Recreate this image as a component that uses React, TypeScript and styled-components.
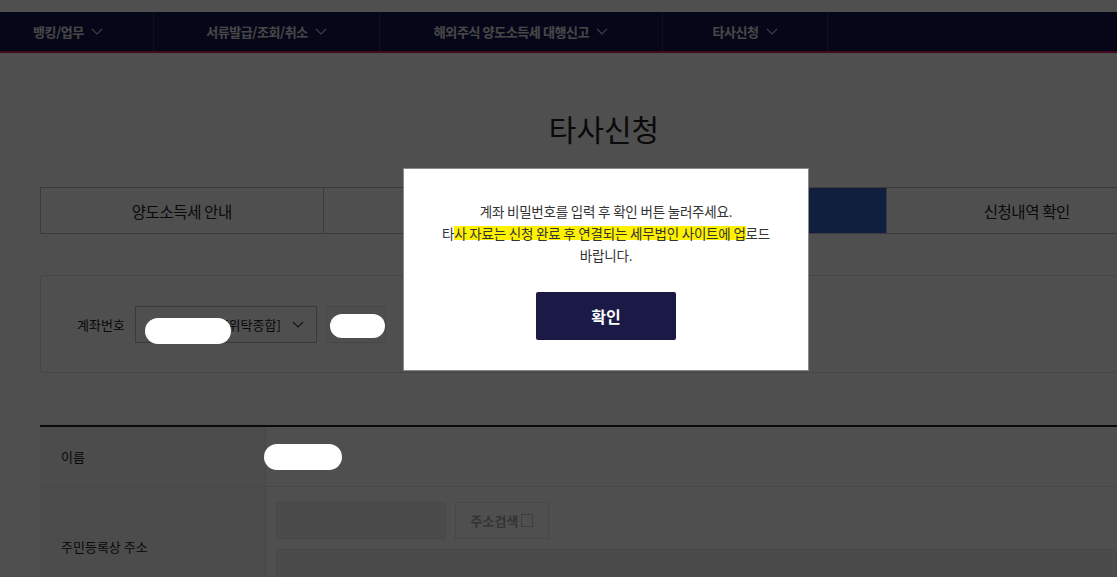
import React from "react";
import styled, { createGlobalStyle } from "styled-components";

const GlobalStyle = createGlobalStyle`
  html, body {
    margin: 0;
    padding: 0;
    background: #ffffff;
    overflow: hidden;
  }
  body {
    font-family: "Noto Sans CJK KR", "Noto Sans", sans-serif;
    color: #333;
  }
  * { box-sizing: border-box; }
`;

const Page = styled.div`
  width: 1208px;
  min-height: 577px;
  background: #fff;
`;

const TopStrip = styled.div`
  height: 12px;
`;

const Nav = styled.nav`
  display: flex;
  height: 41px;
  background: #161650;
  border-bottom: 2px solid #d81b60;
`;

const NavItem = styled.div<{ $w: number; $pr?: number }>`
  width: ${(p) => p.$w}px;
  display: flex;
  align-items: center;
  justify-content: center;
  gap: 7px;
  padding-right: ${(p) => p.$pr ?? 0}px;
  border-right: 1px solid rgba(255, 255, 255, 0.14);
  color: #e6e6ea;
  font-size: 13px;
  font-weight: 700;
  letter-spacing: -0.4px;
`;

const Main = styled.main`
  width: 1128px;
  margin: 0 40px;
`;

const Title = styled.h1`
  margin: 55px 0 0;
  text-align: center;
  font-size: 30px;
  line-height: 40px;
  font-weight: 400;
  color: #222;
`;

const Tabs = styled.div`
  margin-top: 39px;
  display: grid;
  grid-template-columns: repeat(4, 1fr);
  height: 47px;
  border: 1px solid #bdbdbd;
`;

const Tab = styled.div<{ $active?: boolean }>`
  display: flex;
  align-items: center;
  justify-content: center;
  border-left: 1px solid #bdbdbd;
  font-size: 15.5px;
  letter-spacing: -0.4px;
  background: ${(p) => (p.$active ? "#3366c5" : "transparent")};
  color: ${(p) => (p.$active ? "#fff" : "#222")};
  &:first-child { border-left: none; }
`;

const AccountBox = styled.section`
  margin-top: 41px;
  height: 98px;
  display: flex;
  align-items: center;
  padding-left: 36px;
  border: 1px solid #e3e3e3;
  border-radius: 3px;
`;

const FieldLabel = styled.span`
  font-size: 13px;
  color: #222;
  margin-right: 10px;
`;

const Select = styled.div`
  width: 182px;
  height: 37px;
  display: flex;
  align-items: center;
  justify-content: flex-end;
  gap: 11px;
  padding-right: 12px;
  border: 1px solid #bbb;
  font-size: 13px;
  color: #222;
`;

const SmallButton = styled.div`
  width: 60px;
  height: 37px;
  margin-left: 9px;
  border: 1px solid #e6e6e6;
  background: #fafafa;
`;

const Table = styled.section`
  margin-top: 52px;
  border-top: 2px solid #222;
`;

const Row = styled.div<{ $h?: number }>`
  display: grid;
  grid-template-columns: 226px 1fr;
  min-height: ${(p) => (p.$h ? `${p.$h}px` : "auto")};
  border-bottom: 1px solid #e6e6e6;
`;

const LabelCell = styled.div`
  display: flex;
  align-items: center;
  padding-left: 21px;
  background: #f6f6f6;
  border-right: 1px solid #e6e6e6;
  font-size: 13px;
  color: #222;
`;

const ValueCell = styled.div`
  padding: 15px 0 15px 10px;
  display: flex;
  flex-direction: column;
  gap: 10px;
`;

const InputLine = styled.div`
  display: flex;
  gap: 9px;
`;

const Input = styled.div<{ $w?: number; $h: number }>`
  width: ${(p) => (p.$w ? `${p.$w}px` : "100%")};
  height: ${(p) => p.$h}px;
  background: #f2f2f2;
  border: 1px solid #e8e8e8;
`;

const SearchButton = styled.div`
  width: 94px;
  height: 37px;
  display: flex;
  align-items: center;
  justify-content: center;
  gap: 3px;
  border: 1px solid #e6e6e6;
  font-size: 13px;
  font-weight: 700;
  color: #a8a8a8;
`;

const Tofu = styled.span`
  width: 12px;
  height: 13px;
  border: 1px solid #c8c8c8;
`;

const Overlay = styled.div`
  position: fixed;
  inset: 0;
  background: rgba(0, 0, 0, 0.69);
  z-index: 10;
`;

const Dialog = styled.div`
  position: fixed;
  left: 403px;
  top: 168px;
  width: 406px;
  z-index: 20;
  background: #fff;
  border: 1px solid #8a8a8a;
  padding: 31px 0 30px;
  text-align: center;
`;

const Message = styled.p`
  margin: 0;
  font-size: 13.5px;
  line-height: 22px;
  letter-spacing: -0.2px;
  white-space: nowrap;
  color: #333;
`;

const Mark = styled.span`
  background: linear-gradient(
    transparent 3px,
    #fff200 3px,
    #fff200 17px,
    transparent 17px
  );
`;

const ConfirmButton = styled.button`
  display: block;
  margin: 26px auto 0;
  width: 140px;
  height: 48px;
  border: none;
  border-radius: 2px;
  background: #1b1a47;
  color: #fff;
  font-family: inherit;
  font-size: 16px;
  font-weight: 700;
`;

const Redaction = styled.div<{ $x: number; $y: number; $w: number; $h: number }>`
  position: fixed;
  left: ${(p) => p.$x}px;
  top: ${(p) => p.$y}px;
  width: ${(p) => p.$w}px;
  height: ${(p) => p.$h}px;
  border-radius: ${(p) => p.$h / 2}px;
  background: #fff;
  z-index: 30;
`;

const Chevron = ({ color }: { color: string }) => (
  <svg width="12" height="7" viewBox="0 0 12 7" fill="none">
    <polyline points="1,1 6,6 11,1" stroke={color} strokeWidth="1.2" />
  </svg>
);

const navItems = [
  { label: "뱅킹/업무", w: 154, pr: 17 },
  { label: "서류발급/조회/취소", w: 226 },
  { label: "해외주식 양도소득세 대행신고", w: 283 },
  { label: "타사신청", w: 165 },
];

export default function App() {
  return (
    <>
      <GlobalStyle />
      <Page>
        <TopStrip />
        <Nav>
          {navItems.map((n) => (
            <NavItem key={n.label} $w={n.w} $pr={n.pr}>
              {n.label}
              <Chevron color="#c8c8d0" />
            </NavItem>
          ))}
        </Nav>
        <Main>
          <Title>타사신청</Title>
          <Tabs>
            <Tab>양도소득세 안내</Tab>
            <Tab>대행신고 안내</Tab>
            <Tab $active>타사신청</Tab>
            <Tab>신청내역 확인</Tab>
          </Tabs>
          <AccountBox>
            <FieldLabel>계좌번호</FieldLabel>
            <Select>
              [위탁종합]
              <Chevron color="#444" />
            </Select>
            <SmallButton />
          </AccountBox>
          <Table>
            <Row $h={60}>
              <LabelCell>이름</LabelCell>
              <ValueCell />
            </Row>
            <Row>
              <LabelCell>주민등록상 주소</LabelCell>
              <ValueCell>
                <InputLine>
                  <Input $w={170} $h={37} />
                  <SearchButton>
                    주소검색
                    <Tofu />
                  </SearchButton>
                </InputLine>
                <Input $h={41} />
              </ValueCell>
            </Row>
          </Table>
        </Main>
      </Page>
      <Overlay />
      <Dialog>
        <Message>
          계좌 비밀번호를 입력 후 확인 버튼 눌러주세요.
          <br />
          타<Mark>사 자료는 신청 완료 후 연결되는 세무법인 사이트에 업</Mark>로드
          <br />
          바랍니다.
        </Message>
        <ConfirmButton>확인</ConfirmButton>
      </Dialog>
      <Redaction $x={145} $y={318} $w={86} $h={26} />
      <Redaction $x={330} $y={314} $w={55} $h={24} />
      <Redaction $x={264} $y={444} $w={78} $h={26} />
    </>
  );
}
